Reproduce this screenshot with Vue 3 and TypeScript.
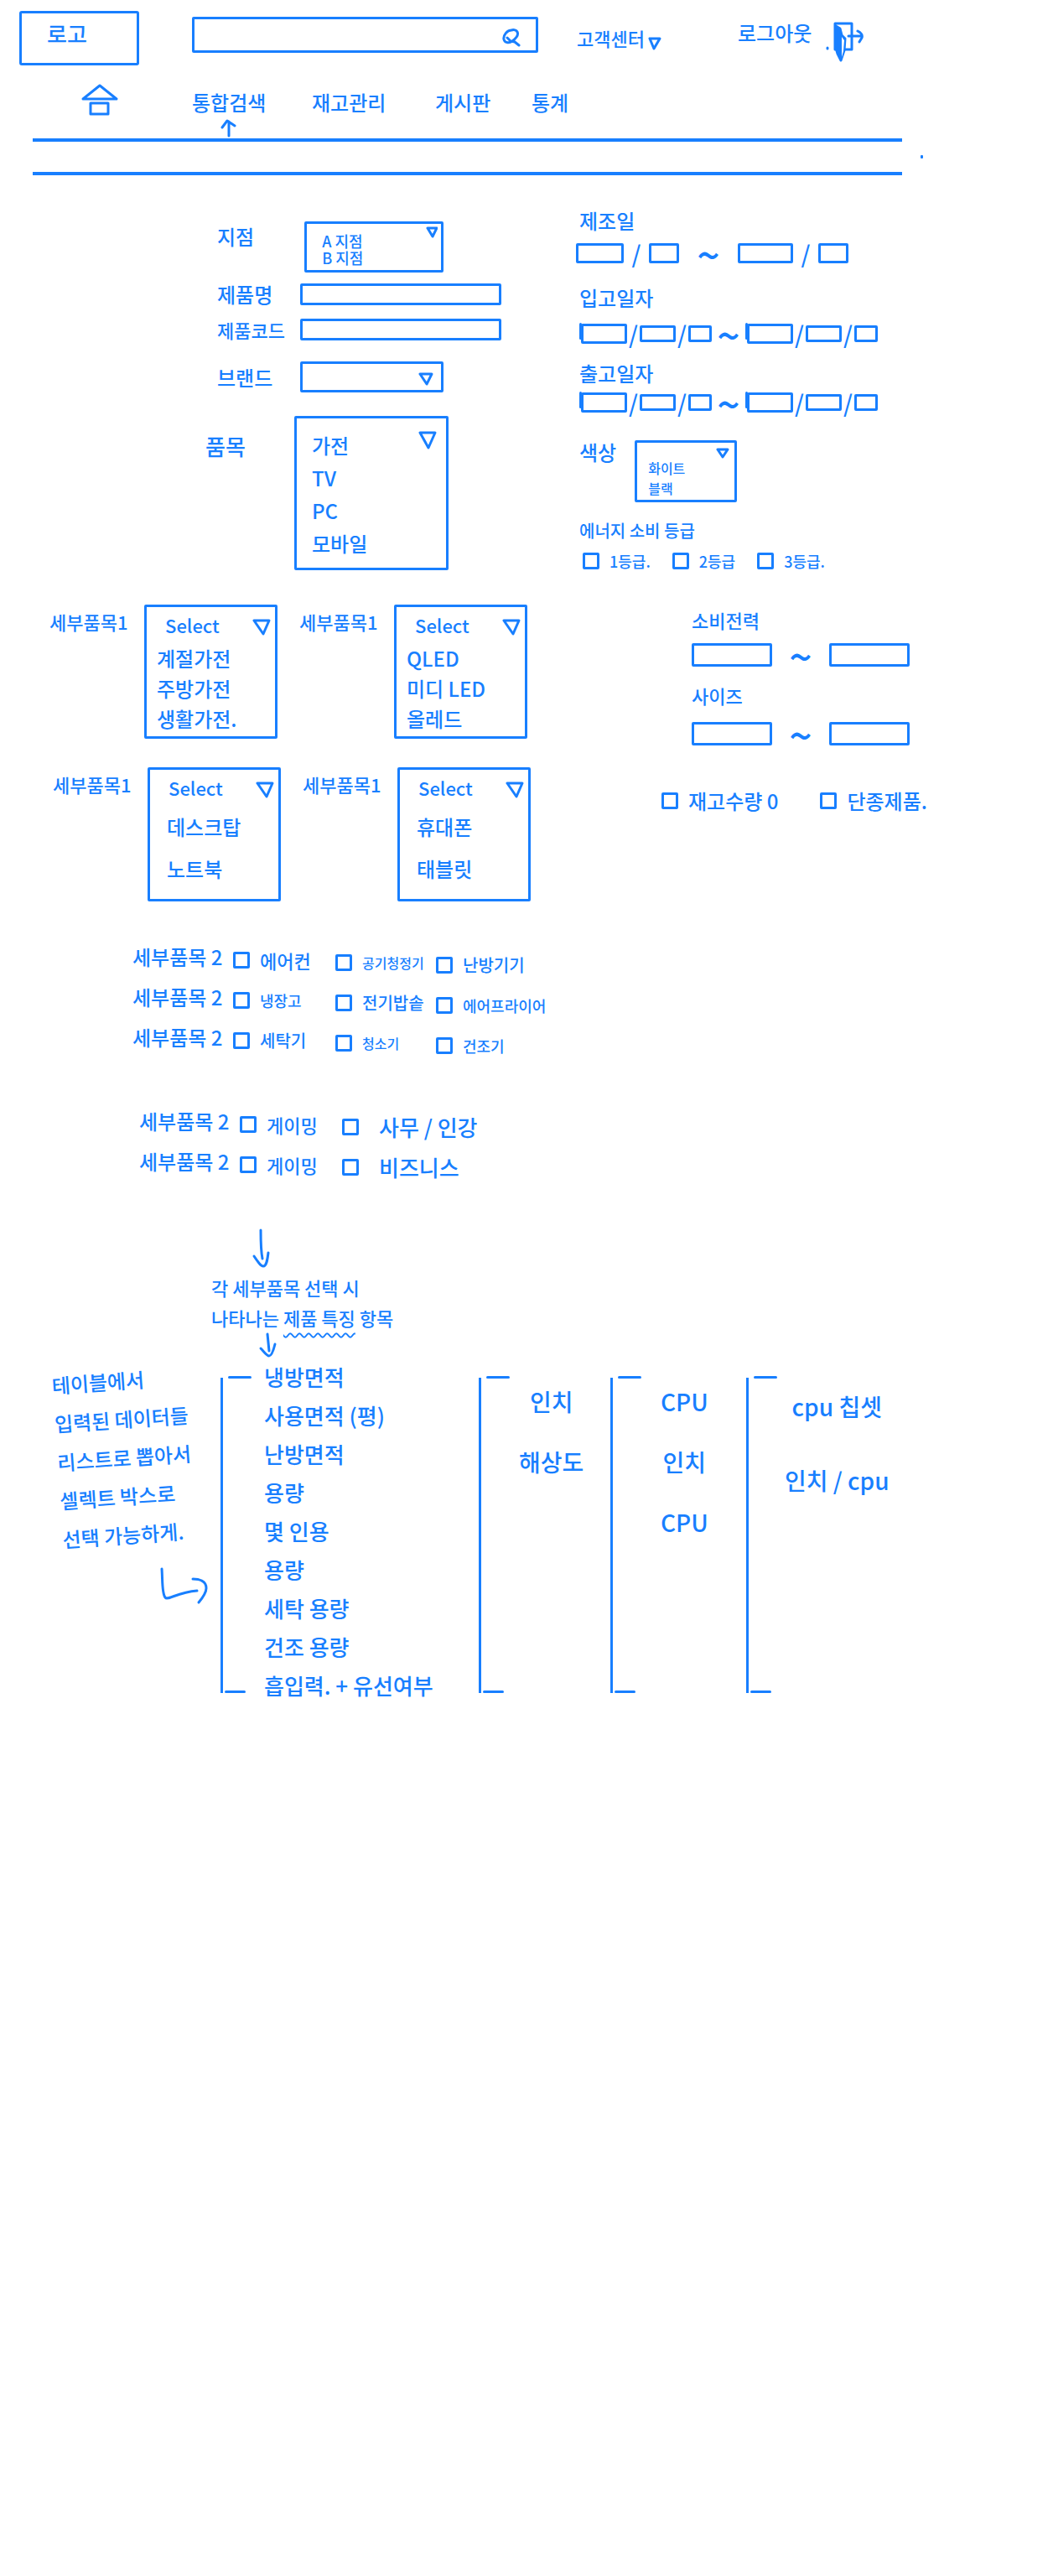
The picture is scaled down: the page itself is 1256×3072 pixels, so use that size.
<script setup lang="ts">
import { ref } from 'vue'

interface Picker {
  id: string
  options: string[]
}

interface Choice {
  text: string
  size: 'xs' | 'sm' | 'md' | 'lg' | 'xl'
}

interface ChoiceRow {
  id: string
  choices: Choice[]
}

const keyword = ref('')

const menus = ['통합검색', '재고관리', '게시판', '통계']

const pickerRows: Picker[][] = [
  [
    { id: 'appliance', options: ['계절가전', '주방가전', '생활가전.'] },
    { id: 'tv', options: ['QLED', '미디 LED', '올레드'] },
  ],
  [
    { id: 'pc', options: ['데스크탑', '노트북'] },
    { id: 'mobile', options: ['휴대폰', '태블릿'] },
  ],
]

const choiceGroups: ChoiceRow[][] = [
  [
    {
      id: 'season',
      choices: [
        { text: '에어컨', size: 'lg' },
        { text: '공기청정기', size: 'xs' },
        { text: '난방기기', size: 'md' },
      ],
    },
    {
      id: 'kitchen',
      choices: [
        { text: '냉장고', size: 'sm' },
        { text: '전기밥솥', size: 'md' },
        { text: '에어프라이어', size: 'sm' },
      ],
    },
    {
      id: 'living',
      choices: [
        { text: '세탁기', size: 'md' },
        { text: '청소기', size: 'xs' },
        { text: '건조기', size: 'sm' },
      ],
    },
  ],
  [
    {
      id: 'desktop',
      choices: [
        { text: '게이밍', size: 'lg' },
        { text: '사무 / 인강', size: 'xl' },
      ],
    },
    {
      id: 'notebook',
      choices: [
        { text: '게이밍', size: 'lg' },
        { text: '비즈니스', size: 'xl' },
      ],
    },
  ],
]

const dateRows = [
  { id: 'in', label: '입고일자' },
  { id: 'out', label: '출고일자' },
]

const ranges = [
  { id: 'power', label: '소비전력' },
  { id: 'size', label: '사이즈' },
]

const applianceSpecs = [
  '냉방면적',
  '사용면적 (평)',
  '난방면적',
  '용량',
  '몇 인용',
  '용량',
  '세탁 용량',
  '건조 용량',
  '흡입력. + 유선여부',
]

const otherSpecs = [
  { id: 'tv', items: ['인치', '해상도'] },
  { id: 'pc', items: ['CPU', '인치', 'CPU'] },
  { id: 'mobile', items: ['cpu 칩셋', '인치 / cpu'] },
]
</script>

<template>
  <div class="page">
    <header class="header">
      <a class="logo" href="#">로고</a>
      <form class="search" role="search" @submit.prevent>
        <input v-model="keyword" type="text" aria-label="통합검색" />
        <button type="submit" aria-label="검색">
          <svg width="22" height="22" viewBox="0 0 22 22">
            <path d="M11 2C6 2 1 8 2 13c1 4 6 5 10 2 4-3 8-7 6-11-1-2-4-3-7-2M6 11l4 4 5 1 5 4" />
          </svg>
        </button>
      </form>
      <button class="support" type="button">
        고객센터
        <svg width="16" height="16" viewBox="0 0 16 16"><path d="M2 2h12L7 14z" /></svg>
      </button>
      <button class="logout" type="button">
        로그아웃
        <svg width="46" height="50" viewBox="0 0 46 50">
          <path d="M3 32v1M12 3h20v31H12z" />
          <path class="solid" d="M13 6l5 3 2 8 4 4-1 14-4 12-4-8-2-7z" />
          <path class="hole" d="M20 19l3 4-1 13-2 7z" />
          <path d="M28 18h15M39 12c4 2 6 5 5 8l-3 5" />
        </svg>
      </button>
    </header>

    <nav class="nav">
      <a class="home" href="#" aria-label="홈">
        <svg width="46" height="38" viewBox="0 0 46 38">
          <path d="M23 2L43 18H3zM12 23h21v13H12z" />
        </svg>
      </a>
      <a v-for="(menu, i) in menus" :key="menu" class="menu" href="#">
        {{ menu }}
        <svg v-if="i === 0" width="20" height="22" viewBox="0 0 20 22">
          <path d="M10 20V3M2 10l6-8 9 6" />
        </svg>
      </a>
    </nav>

    <div class="band">
      <div class="rules"></div>
      <i class="speck"></i>
    </div>

    <main>
      <section class="split basics">
        <div class="fields">
          <div class="field top">
            <label for="branch">지점</label>
            <div class="box branch">
              <select id="branch" size="2">
                <option>A 지점</option>
                <option>B 지점</option>
              </select>
              <svg width="14" height="14" viewBox="0 0 14 14"><path d="M2 2h11L8 12z" /></svg>
            </div>
          </div>
          <div class="field">
            <label for="name">제품명</label>
            <input id="name" class="line" type="text" />
          </div>
          <div class="field code">
            <label for="code">제품코드</label>
            <input id="code" class="line" type="text" />
          </div>
          <div class="field">
            <label for="brand">브랜드</label>
            <div class="box brand">
              <select id="brand">
                <option></option>
              </select>
              <svg width="18" height="16" viewBox="0 0 18 16"><path d="M2 2h14L10 14z" /></svg>
            </div>
          </div>
          <div class="field item">
            <label for="item">품목</label>
            <div class="box items">
              <select id="item" size="4">
                <option>가전</option>
                <option>TV</option>
                <option>PC</option>
                <option>모바일</option>
              </select>
              <svg width="22" height="22" viewBox="0 0 22 22"><path d="M2 2h18L12 20z" /></svg>
            </div>
          </div>
        </div>

        <div class="dates">
          <fieldset class="made">
            <legend>제조일</legend>
            <div class="cells">
              <input class="w57" type="text" aria-label="시작 연도" />
              <span class="slash">/</span>
              <input class="w34" type="text" aria-label="시작 월" />
              <span class="tilde">~</span>
              <input class="w66" type="text" aria-label="종료 연도" />
              <span class="slash">/</span>
              <input class="w34" type="text" aria-label="종료 월" />
            </div>
          </fieldset>
          <fieldset v-for="row in dateRows" :key="row.id" :class="row.id">
            <legend>{{ row.label }}</legend>
            <div class="cells">
              <template v-for="end in ['시작', '종료']" :key="end">
                <span v-if="end === '종료'" class="tilde">~</span>
                <i class="tick"></i>
                <input class="w55" type="text" :aria-label="end + ' 연도'" />
                <span class="slash">/</span>
                <input class="w43" type="text" :aria-label="end + ' 월'" />
                <span class="slash">/</span>
                <input class="w28" type="text" :aria-label="end + ' 일'" />
              </template>
            </div>
          </fieldset>
          <div class="color">
            <label for="color">색상</label>
            <div class="box shades">
              <select id="color" size="2">
                <option>화이트</option>
                <option>블랙</option>
              </select>
              <svg width="16" height="14" viewBox="0 0 16 14"><path d="M2 2h12L8 11z" /></svg>
            </div>
          </div>
          <fieldset class="energy">
            <legend>에너지 소비 등급</legend>
            <div class="grades">
              <label><input type="checkbox" />1등급.</label>
              <label><input type="checkbox" />2등급</label>
              <label><input type="checkbox" />3등급.</label>
            </div>
          </fieldset>
        </div>
      </section>

      <section class="split details">
        <div>
          <div v-for="(row, r) in pickerRows" :key="r" class="pickers" :class="{ lower: r === 1 }">
            <template v-for="picker in row" :key="picker.id">
              <label :for="picker.id">세부품목1</label>
              <div class="box picker">
                <select :id="picker.id" :size="picker.options.length + 1">
                  <option>Select</option>
                  <option v-for="option in picker.options" :key="option">{{ option }}</option>
                </select>
                <svg width="22" height="20" viewBox="0 0 22 20"><path d="M2 2h18L13 18z" /></svg>
              </div>
            </template>
          </div>
        </div>
        <div class="ranges">
          <fieldset v-for="range in ranges" :key="range.id">
            <legend>{{ range.label }}</legend>
            <div class="cells">
              <input class="w96" type="text" aria-label="최소" />
              <span class="tilde">~</span>
              <input class="w96" type="text" aria-label="최대" />
            </div>
          </fieldset>
          <div class="flags">
            <label><input type="checkbox" />재고수량 0</label>
            <label><input type="checkbox" />단종제품.</label>
          </div>
        </div>
      </section>

      <section class="choices">
        <div v-for="(group, g) in choiceGroups" :key="g" class="group" :class="{ pair: g === 1 }">
          <div v-for="row in group" :key="row.id" class="choice-row" role="group" aria-label="세부품목 2">
            <span>세부품목 2</span>
            <label v-for="choice in row.choices" :key="choice.text" :class="choice.size">
              <input type="checkbox" />{{ choice.text }}
            </label>
          </div>
        </div>
      </section>

      <section class="memo">
        <svg width="24" height="48" viewBox="0 0 24 48">
          <path d="M11 2c0 14 0 24 2 34M3 33c4 6 8 12 11 12 4 0 5-8 6-16" />
        </svg>
        <p>각 세부품목 선택 시<br />나타나는 <u>제품 특징</u> 항목</p>
        <svg class="short" width="24" height="30" viewBox="0 0 24 30">
          <path d="M11 2l2 20M3 19c4 4 7 9 10 9s5-6 7-14" />
        </svg>
      </section>

      <section class="specs">
        <div class="note">
          <p>테이블에서<br />입력된 데이터들<br />리스트로 뽑아서<br />셀렉트 박스로<br />선택 가능하게.</p>
          <svg width="60" height="46" viewBox="0 0 60 46">
            <path d="M3 2c1 14 0 29 4 34 3 4 14-6 38-8M40 14c7 0 16 2 16 11 0 5-4 11-9 17" />
          </svg>
        </div>
        <div class="column first">
          <i class="bracket"></i>
          <ul>
            <li v-for="(spec, i) in applianceSpecs" :key="i">{{ spec }}</li>
          </ul>
        </div>
        <div v-for="column in otherSpecs" :key="column.id" class="column" :class="column.id">
          <i class="bracket"></i>
          <ul>
            <li v-for="(spec, i) in column.items" :key="i">{{ spec }}</li>
          </ul>
        </div>
      </section>
    </main>
  </div>
</template>

<style>
body {
  background: #fff;
}
</style>

<style scoped>
.page {
  --ink: #187fff;
  color: var(--ink);
  font: 500 24px/28px 'Noto Sans CJK KR', 'Noto Sans', sans-serif;
  white-space: nowrap;
  padding-bottom: 40px;
}
.page * {
  box-sizing: border-box;
}
a {
  color: inherit;
  text-decoration: none;
}
button,
input,
select {
  font: inherit;
  color: inherit;
  background: none;
  border: 0;
  border-radius: 0;
  margin: 0;
  padding: 0;
  appearance: none;
  outline: 0;
}
fieldset {
  border: 0;
  margin: 0;
  padding: 0;
  min-width: 0;
}
legend {
  padding: 0;
}
svg {
  fill: none;
  stroke: var(--ink);
  stroke-width: 3;
  stroke-linecap: round;
  stroke-linejoin: round;
  flex: none;
}
input[type='text'] {
  border: 3px solid var(--ink);
  border-radius: 2px;
}
input[type='checkbox'] {
  width: 20px;
  height: 20px;
  border: 3px solid var(--ink);
  border-radius: 2px;
  flex: none;
}
input[type='checkbox']:checked {
  background: var(--ink);
}

/* header */
.header {
  display: grid;
  grid-template-columns: 23fr 143fr 63fr 413fr 46fr 110fr 82fr 376fr;
  align-items: start;
  padding-top: 13px;
}
.logo {
  grid-column: 2;
  height: 65px;
  padding: 10px 30px;
  border: 3px solid var(--ink);
  border-radius: 3px;
  font-size: 26px;
}
.search {
  grid-column: 4;
  position: relative;
  margin-top: 7px;
}
.search input {
  display: block;
  width: 100%;
  height: 43px;
  padding: 0 56px 0 12px;
}
.search button {
  position: absolute;
  top: 14px;
  right: 21px;
  height: 22px;
}
.search svg {
  display: block;
}
.support {
  grid-column: 6;
  display: flex;
  align-items: center;
  gap: 4px;
  margin-top: 17px;
  font-size: 22px;
}
.support svg {
  margin-top: 14px;
}
.logout {
  grid-column: 8;
  display: flex;
  align-items: flex-start;
  gap: 16px;
  margin-top: 12px;
}
.logout .solid {
  fill: var(--ink);
}
.logout .hole {
  fill: #fff;
  stroke: none;
}

/* menu */
.nav {
  display: grid;
  grid-template-columns: 96fr 133fr 143fr 147fr 115fr 622fr;
  height: 65px;
  margin-top: 22px;
}
.home {
  grid-column: 2;
}
.menu {
  display: flex;
  flex-direction: column;
  align-items: center;
  justify-self: start;
  padding-top: 8px;
}
.menu svg {
  margin-top: 6px;
}

.band {
  display: grid;
  grid-template-columns: 39fr 1037fr 22fr 158fr;
  align-items: center;
}
.rules {
  grid-column: 2;
  height: 44px;
  border: solid var(--ink);
  border-width: 4px 0;
}
.speck {
  grid-column: 4;
  width: 3px;
  height: 4px;
  border-radius: 1px;
  background: var(--ink);
}

/* shared form parts */
.split {
  display: grid;
  grid-template-columns: minmax(0, 670fr) minmax(0, 586fr);
}
.box {
  position: relative;
  border: 3px solid var(--ink);
  border-radius: 2px;
}
.box select {
  display: block;
  width: 100%;
  height: 100%;
  overflow: hidden;
}
.box svg {
  position: absolute;
  pointer-events: none;
}
option {
  display: flex;
  align-items: center;
  font: inherit;
  color: var(--ink);
  padding: 0;
  min-height: 0;
}
option:checked {
  color: var(--ink);
  background: #fff linear-gradient(#fff, #fff);
}
.cells {
  display: flex;
  align-items: center;
  height: 26px;
}
.cells input {
  height: 20px;
}
.slash {
  width: 15px;
  text-align: center;
  font-size: 28px;
}
.tilde {
  width: 40px;
  display: flex;
  justify-content: center;
  font-size: 48px;
}
.w28 {
  width: 28px;
}
.w34 {
  width: 36px;
}
.w43 {
  width: 43px;
}
.cells .w55 {
  width: 55px;
  height: 24px;
}
.w57 {
  width: 57px;
}
.w66 {
  width: 66px;
}
.cells .w96 {
  width: 96px;
  height: 28px;
}
.tick {
  width: 3px;
  height: 20px;
  align-self: flex-start;
  border-radius: 2px;
  background: var(--ink);
  margin-right: -1px;
}

/* basic conditions */
.basics {
  padding-top: 40px;
}
.fields {
  padding-top: 15px;
}
.field {
  display: grid;
  grid-template-columns: 259fr 99fr 171fr 69fr 72fr;
  align-items: center;
}
.field > label {
  grid-column: 2;
}
.field.top {
  align-items: start;
}
.top > label {
  padding-top: 4px;
}
.branch {
  justify-self: end;
  width: 97%;
  height: 61px;
}
.branch select {
  font-size: 18px;
  padding: 10px 0 0 18px;
}
.branch option {
  height: 20px;
}
.branch svg {
  top: 3px;
  right: 4px;
}
.field:nth-child(2) {
  margin-top: 12px;
}
.field:nth-child(3) {
  margin-top: 14px;
}
.field:nth-child(4) {
  margin-top: 24px;
}
.code > label {
  font-size: 22px;
}
.line {
  grid-column: 3 / 5;
  height: 26px;
}
.brand {
  height: 37px;
}
.brand svg {
  right: 9px;
  top: 10px;
}
.field.item {
  grid-template-columns: 245fr 106fr 184fr 135fr;
  align-items: start;
  margin-top: 28px;
}
.item > label {
  font-size: 26px;
  padding-top: 22px;
}
.items {
  height: 184px;
}
.items select {
  padding: 12px 0 0 18px;
}
.items option {
  height: 39px;
}
.items svg {
  top: 15px;
  right: 11px;
}

/* dates, colour, grade */
.dates {
  padding-left: 17px;
}
.dates legend {
  padding-left: 4px;
}
.made .cells {
  margin-top: 12px;
}
.made input {
  height: 24px;
}
.made .slash {
  width: 30px;
}
.made .tilde {
  width: 70px;
}
.in {
  margin-top: 26px;
}
.in .cells {
  margin: 16px 0 0 4px;
}
.out {
  margin-top: 20px;
}
.out .cells {
  margin: 8px 0 0 4px;
}
.color {
  display: flex;
  gap: 22px;
  padding-left: 4px;
  margin-top: 32px;
}
.shades {
  width: 122px;
  height: 74px;
}
.shades select {
  font-size: 16px;
  padding: 18px 0 0 13px;
}
.shades option {
  height: 24px;
}
.shades svg {
  top: 6px;
  right: 6px;
}
.energy {
  margin-top: 22px;
  font-size: 20px;
  line-height: 24px;
}
.grades {
  display: flex;
  gap: 26px;
  padding-left: 8px;
  margin-top: 12px;
  font-size: 18px;
}
.grades label {
  display: flex;
  align-items: center;
  gap: 12px;
}

/* detail pickers and ranges */
.details {
  padding-top: 40px;
}
.pickers {
  display: grid;
  grid-template-columns: 113fr 159fr 26fr 113fr 159fr;
  padding: 0 41px 0 59px;
  font-size: 22px;
}
.pickers > label {
  padding-top: 6px;
}
.pickers > label:nth-of-type(2) {
  grid-column: 4;
}
.pickers.lower {
  margin-top: 34px;
  padding: 0 37px 0 63px;
}
.picker {
  height: 160px;
}
.picker select {
  font-size: 24px;
}
.picker option {
  height: 36px;
  padding-left: 12px;
}
.picker option:first-child {
  height: 42px;
  padding-left: 22px;
  font-size: 22px;
}
.lower option {
  height: 50px;
  padding-left: 20px;
}
.picker svg {
  top: 14px;
  right: 5px;
}
.ranges {
  padding-left: 155px;
  font-size: 22px;
}
.ranges legend {
  padding-top: 4px;
}
.ranges .cells {
  height: 28px;
  margin-top: 14px;
}
.ranges fieldset + fieldset {
  margin-top: 16px;
}
.ranges fieldset + fieldset .cells {
  margin-top: 18px;
}
.ranges .tilde {
  width: 68px;
}
.flags {
  display: flex;
  gap: 50px;
  margin: 52px 0 0 -36px;
  font-size: 24px;
}
.flags label {
  display: flex;
  align-items: center;
  gap: 12px;
}

/* detail check rows */
.choices {
  padding: 42px 0 0 158px;
}
.choice-row {
  display: grid;
  grid-template-columns: 120px 122px 120px 1fr;
  height: 48px;
  align-items: start;
  line-height: 48px;
}
.choice-row label {
  display: flex;
  align-items: center;
  gap: 12px;
  height: 48px;
  padding-top: 8px;
}
.choice-row label:nth-of-type(2) {
  padding-top: 14px;
}
.choice-row label:nth-of-type(3) {
  padding-top: 20px;
}
.pair {
  padding: 52px 0 0 8px;
}
.pair label + label {
  gap: 24px;
}
.xs {
  font-size: 16px;
}
.sm {
  font-size: 18px;
}
.md {
  font-size: 20px;
}
.lg {
  font-size: 22px;
}
.xl {
  font-size: 26px;
}

/* memo */
.memo {
  padding: 56px 0 0 252px;
  font-size: 22px;
  line-height: 36px;
}
.memo svg {
  display: block;
  margin-left: 48px;
}
.memo p {
  margin: 4px 0 0;
}
.memo .short {
  margin-left: 56px;
}
u {
  text-decoration: underline wavy 2px;
  text-underline-offset: 8px;
}

/* bracketed specs */
.specs {
  display: grid;
  grid-template-columns: 263fr 308fr 157fr 162fr 366fr;
  align-items: start;
}
.note {
  padding: 4px 0 0 68px;
  line-height: 46px;
}
.note p {
  margin: 0;
  width: 170px;
  transform: rotate(-4deg);
}
.note svg {
  display: block;
  margin: 16px 0 0 122px;
}
.column {
  display: flex;
  min-width: 0;
  height: 416px;
}
.bracket {
  position: relative;
  flex: none;
  width: 36px;
  margin: 24px 0 16px;
  border-left: 3px solid var(--ink);
}
.bracket::before,
.bracket::after {
  content: '';
  position: absolute;
  height: 3px;
  border-radius: 2px;
  background: var(--ink);
}
.bracket::before {
  top: -2px;
  left: 6px;
  width: 28px;
}
.bracket::after {
  bottom: 0;
  left: 2px;
  width: 25px;
}
ul {
  list-style: none;
  margin: 0;
  padding: 16px 0 0 12px;
  font-size: 28px;
  line-height: 72px;
  text-align: center;
}
.first ul {
  padding: 0 0 0 16px;
  font-size: 26px;
  line-height: 46px;
  text-align: left;
}
.pc ul {
  padding-left: 24px;
}
.mobile ul {
  padding: 14px 0 0 10px;
  line-height: 88px;
}
</style>
